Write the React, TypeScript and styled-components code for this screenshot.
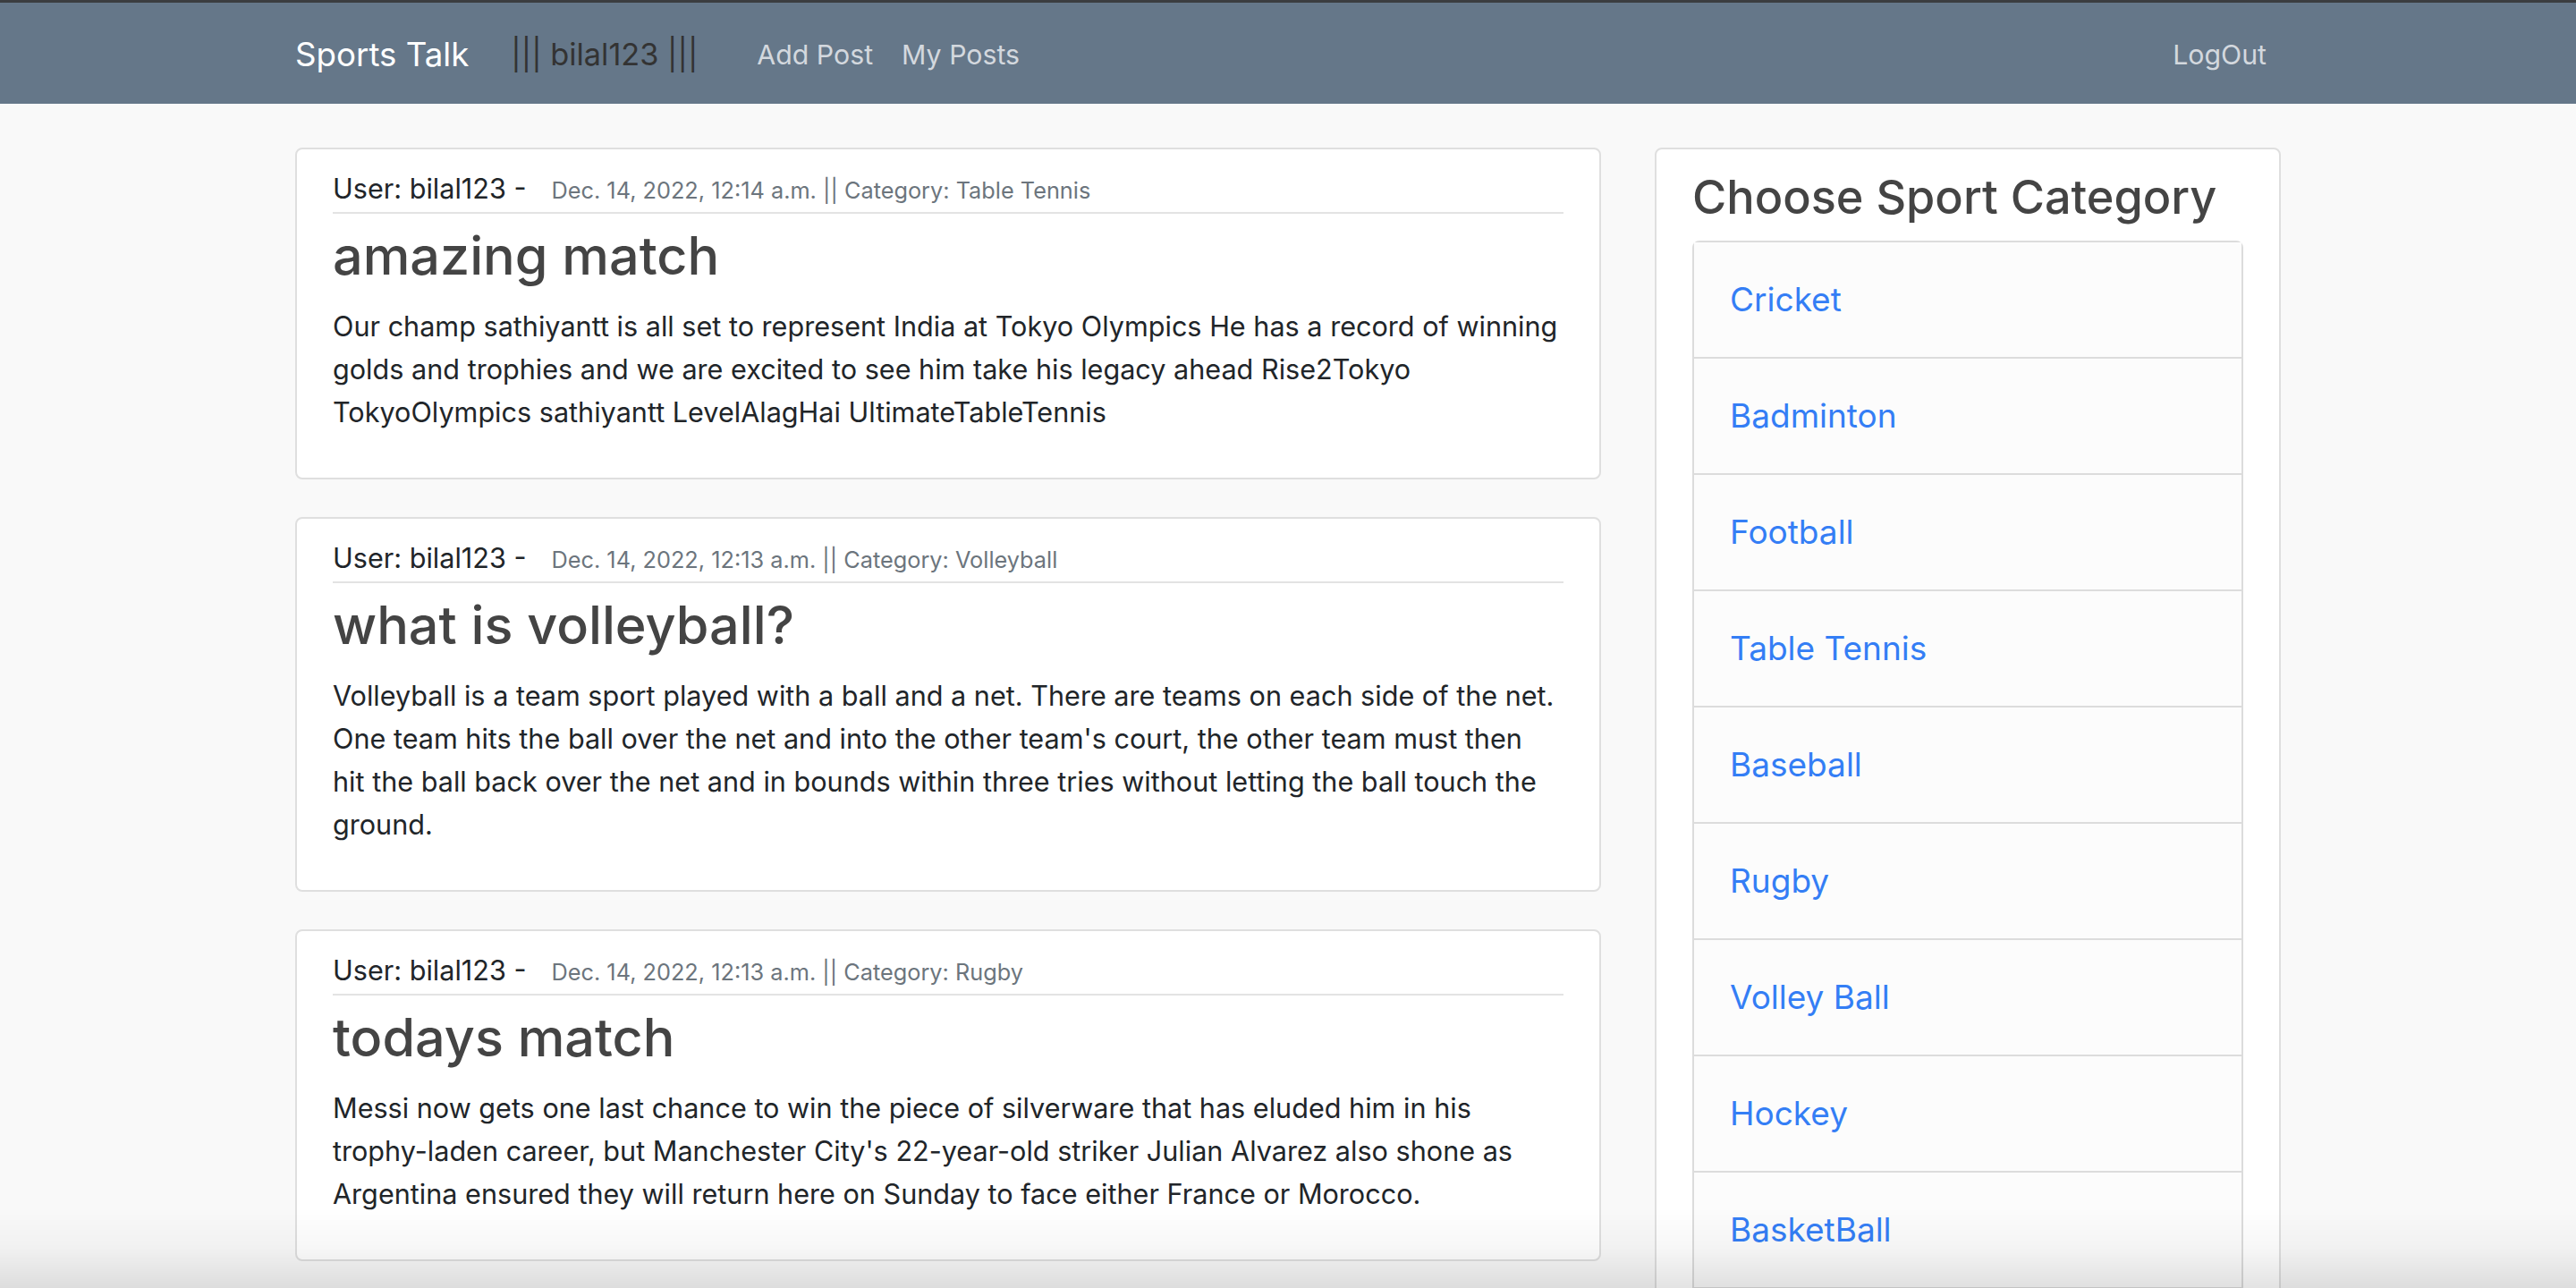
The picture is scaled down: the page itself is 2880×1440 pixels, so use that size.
import * as React from 'react';
import styled, { createGlobalStyle } from 'styled-components';

const GlobalStyle = createGlobalStyle`
  html, body {
    margin: 0;
    padding: 0;
    background: #f9f9f9;
    font-family: Inter, "Liberation Sans", Arial, sans-serif;
    color: #212529;
  }
  * { box-sizing: border-box; }
`;

// Navbar
const NavBar = styled.header`
  background: #657789;
  border-top: 3px solid #3b3d40;
  height: 116px;
  padding-top: 3px;
`;

const Container = styled.div`
  width: 2280px;
  margin: 0 auto;
  padding: 0 30px;
`;

const NavInner = styled(Container)`
  display: flex;
  align-items: center;
  height: 100%;
`;

const Brand = styled.a`
  font-size: 36.7px;
  line-height: 60px;
  color: #fff;
  text-decoration: none;
  margin-right: 47px;
`;

const UserTag = styled.span`
  font-size: 34.3px;
  line-height: 54px;
  color: #333;
  margin-right: 50px;
`;

const NavLink = styled.a<{ $last?: boolean }>`
  font-size: 30.3px;
  line-height: 48px;
  color: #d3d8de;
  text-decoration: none;
  padding: 0 16px;
  margin-left: ${(p) => (p.$last ? 'auto' : '0')};
`;

// Main layout
const Main = styled(Container)`
  padding-top: 49px;
`;

const Row = styled.div`
  display: grid;
  grid-template-columns: 2fr 1fr;
  margin: 0 -30px;
`;

const Col = styled.div`
  padding: 0 30px;
  min-width: 0;
`;

// Post cards
const PostCard = styled.article`
  background: #fff;
  border: 2px solid #dfdfdf;
  border-radius: 8px;
  padding: 20px 40px 17px;
  & + & {
    margin-top: 42px;
  }
`;

const MetaRow = styled.div`
  font-size: 30.6px;
  line-height: 48px;
  color: #212529;
  border-bottom: 2px solid #e3e3e3;
  white-space: nowrap;
`;

const MetaSmall = styled.small`
  font-size: 25.3px;
  color: #6c757d;
  margin-left: 28px;
`;

const PostTitle = styled.h2`
  font-size: 59.3px;
  line-height: 76px;
  font-weight: 500;
  color: #444;
  margin: 9px 0 17px;
`;

const PostBody = styled.p`
  font-size: 30.6px;
  line-height: 48px;
  color: #212529;
  margin: 0 4px 32px 0;
`;

const NoWrap = styled.span`
  white-space: nowrap;
`;

// Sidebar
const SideCard = styled.aside`
  background: #fff;
  border: 2px solid #dfdfdf;
  border-radius: 8px;
  padding: 20px 40px;
`;

const SideTitle = styled.h3`
  font-size: 52.2px;
  line-height: 67px;
  font-weight: 500;
  color: #444;
  margin: 0 0 15px;
`;

const CategoryList = styled.ul`
  list-style: none;
  margin: 0;
  padding: 0;
  border: 2px solid #dcdcdc;
  border-bottom: none;
  border-radius: 8px 8px 0 0;
`;

const CategoryItem = styled.li`
  background: #fcfcfc;
  padding: 40px;
  border-bottom: 2px solid #dcdcdc;
`;

const CategoryLink = styled.a`
  font-size: 37px;
  line-height: 48px;
  color: #347ef5;
  text-decoration: none;
`;

const BottomShade = styled.div`
  position: fixed;
  left: 0;
  right: 0;
  bottom: 0;
  height: 90px;
  pointer-events: none;
  background: linear-gradient(to bottom, rgba(0, 0, 0, 0) 0%, rgba(0, 0, 0, 0.03) 50%, rgba(0, 0, 0, 0.11) 100%);
`;

interface Post {
  title: string;
  date: string;
  category: string;
  body: string;
}

const posts: Post[] = [
  {
    title: 'amazing match',
    date: 'Dec. 14, 2022, 12:14 a.m.',
    category: 'Table Tennis',
    body:
      'Our champ sathiyantt is all set to represent India at Tokyo Olympics He has a record of winning golds and trophies and we are excited to see him take his legacy ahead Rise2Tokyo TokyoOlympics sathiyantt LevelAlagHai UltimateTableTennis',
  },
  {
    title: 'what is volleyball?',
    date: 'Dec. 14, 2022, 12:13 a.m.',
    category: 'Volleyball',
    body:
      "Volleyball is a team sport played with a ball and a net. There are teams on each side of the net. One team hits the ball over the net and into the other team's court, the other team must then hit the ball back over the net and in bounds within three tries without letting the ball touch the ground.",
  },
  {
    title: 'todays match',
    date: 'Dec. 14, 2022, 12:13 a.m.',
    category: 'Rugby',
    body:
      "Messi now gets one last chance to win the piece of silverware that has eluded him in his trophy-laden career, but Manchester City's 22-year-old striker Julian Alvarez also shone as Argentina ensured they will return here on Sunday to face either France or Morocco.",
  },
];

const categories = [
  'Cricket',
  'Badminton',
  'Football',
  'Table Tennis',
  'Baseball',
  'Rugby',
  'Volley Ball',
  'Hockey',
  'BasketBall',
];

// hyphenated words stay whole, as the browser in the screenshot kept them
function renderBody(text: string) {
  return text.split(' ').map((word, i) => (
    <React.Fragment key={i}>
      {i > 0 && ' '}
      {word.includes('-') ? <NoWrap>{word}</NoWrap> : word}
    </React.Fragment>
  ));
}

export default function App() {
  return (
    <>
      <GlobalStyle />
      <NavBar>
        <NavInner>
          <Brand href="#">Sports Talk</Brand>
          <UserTag>||| bilal123 |||</UserTag>
          <NavLink href="#">Add Post</NavLink>
          <NavLink href="#">My Posts</NavLink>
          <NavLink href="#" $last>
            LogOut
          </NavLink>
        </NavInner>
      </NavBar>
      <Main>
        <Row>
          <Col>
            {posts.map((post) => (
              <PostCard key={post.title}>
                <MetaRow>
                  User: bilal123 -
                  <MetaSmall>
                    {post.date} || Category: {post.category}
                  </MetaSmall>
                </MetaRow>
                <PostTitle>{post.title}</PostTitle>
                <PostBody>{renderBody(post.body)}</PostBody>
              </PostCard>
            ))}
          </Col>
          <Col>
            <SideCard>
              <SideTitle>Choose Sport Category</SideTitle>
              <CategoryList>
                {categories.map((c) => (
                  <CategoryItem key={c}>
                    <CategoryLink href="#">{c}</CategoryLink>
                  </CategoryItem>
                ))}
              </CategoryList>
            </SideCard>
          </Col>
        </Row>
      </Main>
      <BottomShade />
    </>
  );
}
